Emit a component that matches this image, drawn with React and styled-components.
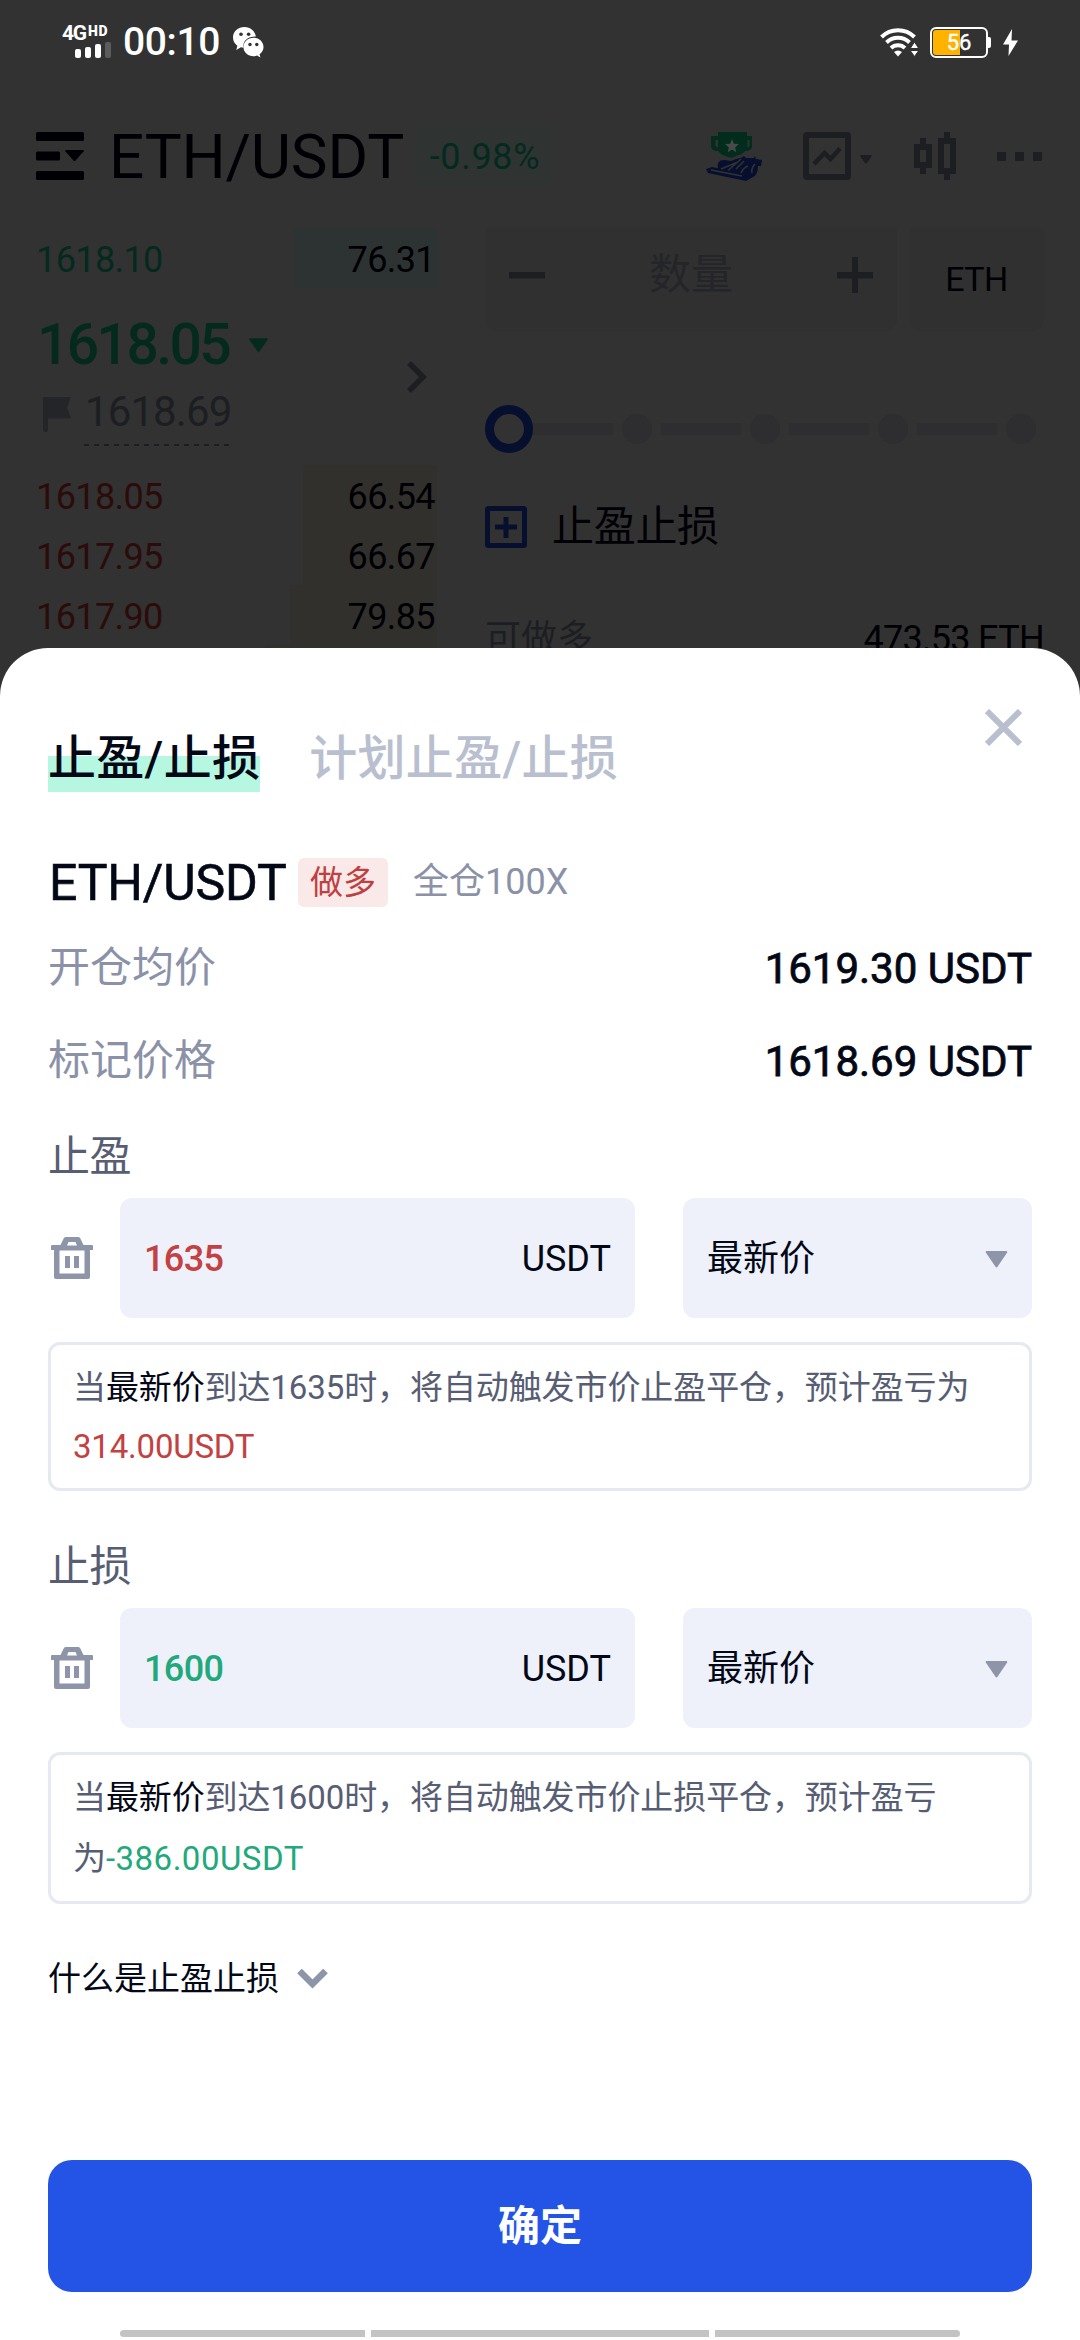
import { Fragment } from 'react'
import styled, { createGlobalStyle, css } from 'styled-components'

const GlobalStyle = createGlobalStyle`
  * {
    box-sizing: border-box;
  }

  body {
    margin: 0;
    background: #323232;
    font-family: Roboto, 'Noto Sans CJK SC', sans-serif;
  }

  svg {
    display: block;
    flex: none;
  }
`

const Page = styled.div`
  width: 1080px;
  height: 2340px;
  display: flex;
  flex-direction: column;
  overflow: hidden;
  background: #323232;
`

/* status bar */
const StatusBar = styled.div`
  height: 84px;
  flex: none;
  display: flex;
  justify-content: space-between;
  align-items: center;
  padding: 0 62px;
  color: #fff;
`
const StatusGroup = styled.div`
  display: flex;
  align-items: center;
`
const Network = styled.div`
  width: 61px;
  height: 32px;
  display: flex;
  flex-direction: column;
  justify-content: space-between;
`
const NetworkLabel = styled.div`
  display: flex;
  align-items: flex-start;
  height: 15px;
  font-size: 21px;
  font-weight: 700;
  line-height: 15px;
  letter-spacing: -1.2px;

  & small {
    margin-left: 2px;
    font-size: 14px;
    font-weight: 900;
    line-height: 10px;
    letter-spacing: 0.6px;
  }
`
const SignalBars = styled.div`
  display: flex;
  align-items: flex-end;
  gap: 4px;
  padding-left: 13px;
`
const SignalBar = styled.i`
  width: 6px;
  height: ${props => props.$height}px;
  border-radius: 2px;
  background: ${props => (props.$off ? '#5c5c5c' : '#fff')};
`
const Clock = styled.span`
  width: 110px;
  font-size: 39px;
  font-weight: 500;
  line-height: 40px;
  letter-spacing: -0.4px;
`
const Battery = styled.div`
  width: 58px;
  height: 31px;
  margin: 0 15px 0 12px;
  padding: 1px;
  border: 2px solid #fff;
  border-radius: 6px;
  background: linear-gradient(to right, #ffb300 52%, transparent 52%) content-box;
  font-size: 22px;
  line-height: 26px;
  text-align: center;
  -webkit-text-stroke: 0.4px #fff;
  position: relative;

  &::after {
    content: '';
    position: absolute;
    top: 8px;
    right: -5px;
    width: 3px;
    height: 11px;
    border-radius: 0 2px 2px 0;
    background: #fff;
  }
`

/* trade page under the mask */
const TradePage = styled.div`
  height: 564px;
  flex: none;
  display: flex;
  flex-direction: column;
  overflow: hidden;
  color: #000004;
`
const Header = styled.div`
  height: 144px;
  flex: none;
  display: flex;
  align-items: center;
  padding: 0 38px 0 36px;
`
const Pair = styled.span`
  width: 306px;
  margin-left: 25px;
  padding-top: 2px;
  font-size: 62px;
  line-height: 72px;
  letter-spacing: -0.2px;
  white-space: nowrap;
`
const Change = styled.span`
  width: 140px;
  height: 60px;
  border-radius: 6px;
  background: #2f3433;
  color: #042a1e;
  font-size: 36px;
  line-height: 62px;
  letter-spacing: 0.7px;
  text-align: center;
`
const HeaderIcons = styled.div`
  flex: 1;
  display: flex;
  align-items: center;
  justify-content: flex-end;
  gap: 41px;
`
const TradeBody = styled.div`
  display: flex;
  flex: 1;
`
const OrderBook = styled.div`
  width: 437px;
  display: flex;
  flex-direction: column;
`
const OrderRow = styled.div`
  height: 60px;
  flex: none;
  display: flex;
  justify-content: space-between;
  padding: 0 2px 0 36px;
  background: linear-gradient(${props => props.$tint}, ${props => props.$tint}) right /
    ${props => props.$depth}px 100% no-repeat;
  font-size: 36px;
  line-height: 65px;
  letter-spacing: -0.6px;
`
const OrderPrice = styled.span`
  color: ${props => (props.$buy ? '#2c0b0b' : '#042a1e')};
`
const LastPrice = styled.div`
  height: 177px;
  flex: none;
  display: flex;
  align-items: center;
  justify-content: space-between;
  padding: 0 10px 0 36px;
`
const PriceStack = styled.div`
  display: flex;
  flex-direction: column;
  height: 177px;
  padding-top: 21px;
`
const BigPrice = styled.div`
  display: flex;
  align-items: center;
  gap: 20px;
  height: 72px;
  padding-left: 1px;
  color: #042a1e;
  font-size: 57px;
  font-weight: 500;
  line-height: 72px;
  letter-spacing: -2.6px;
`
const MarkPrice = styled.div`
  display: flex;
  align-items: center;
  gap: 13px;
  height: 66px;
  padding-left: 7px;
`
const MarkValue = styled.span`
  width: 145px;
  height: 64px;
  padding-left: 1px;
  background: repeating-linear-gradient(to right, #1d1e22 0 5px, transparent 5px 10px) bottom /
    100% 2px no-repeat;
  color: #1d1e22;
  font-size: 42px;
  line-height: 60px;
  letter-spacing: -0.9px;
`
const OrderForm = styled.div`
  flex: 1;
  padding: 0 36px 0 48px;
`
const FormRow = styled.div`
  display: flex;
  gap: 12px;
  height: 103px;
`
const FormBox = styled.div`
  ${props => (props.$width ? `width: ${props.$width}px;` : 'flex: 1;')}
  display: flex;
  align-items: center;
  justify-content: ${props => (props.$width ? 'center' : 'space-between')};
  padding: 0 24px ${props => (props.$width ? 2 : 10)}px;
  border-radius: 0 0 12px 12px;
  background: #303030;
  font-size: 34px;
  letter-spacing: -0.5px;
  line-height: 46px;
`
const Placeholder = styled.span`
  color: #242528;
  font-size: 42px;
  letter-spacing: 0;
`
const Slider = styled.div`
  display: flex;
  align-items: center;
  margin-top: 74px;
  height: 48px;
`
const Thumb = styled.i`
  width: 48px;
  height: 48px;
  flex: none;
  border: 9px solid #060f2d;
  border-radius: 50%;
`
const Track = styled.i`
  width: 80px;
  height: 12px;
  margin-right: 9px;
  background: #2e2e31;
`
const Stop = styled.i`
  width: 30px;
  height: 30px;
  margin-right: ${props => (props.$last ? 0 : 9)}px;
  border-radius: 50%;
  background: #2e2e31;
`
const CheckRow = styled.div`
  display: flex;
  align-items: center;
  gap: 25px;
  height: 60px;
  margin-top: 44px;
  font-size: 42px;
  line-height: 60px;
  letter-spacing: -0.3px;
`
const AvailableRow = styled.div`
  display: flex;
  justify-content: space-between;
  height: 39px;
  margin-top: 52px;
  font-size: 36px;
  line-height: 60px;
  letter-spacing: -0.7px;

  & span:first-child {
    color: #1d1e22;
    letter-spacing: 0;
  }
`

/* bottom sheet */
const Sheet = styled.div`
  flex: 1;
  display: flex;
  flex-direction: column;
  padding: 0 48px;
  border-radius: 48px 48px 0 0;
  background: #fff;
  color: #030817;
`
const Tabs = styled.div`
  display: flex;
  align-items: flex-start;
  height: 198px;
  padding-top: 77px;
`
const Tab = styled.span`
  height: 67px;
  margin-right: 49px;
  font-size: 48px;
  font-weight: 500;
  line-height: 67px;
  letter-spacing: 0.3px;
  color: ${props => (props.$active ? '#030817' : '#b9bfcf')};
  ${props =>
    props.$active &&
    css`
      background: linear-gradient(#b6f7e2, #b6f7e2) bottom / 100% 36px no-repeat;
    `}
`
const Close = styled.div`
  margin: -16px 10px 0 auto;
`
const Position = styled.div`
  display: flex;
  align-items: center;
  height: 72px;
  line-height: 48px;
`
const PositionPair = styled.span`
  width: 250px;
  padding: 2px 0 0 1px;
  font-size: 50px;
  -webkit-text-stroke: 0.6px #030817;
  letter-spacing: -0.2px;
`
const SideTag = styled.span`
  width: 90px;
  height: 49px;
  margin-right: 25px;
  border-radius: 6px;
  background: #fae9e9;
  color: #bf4040;
  font-size: 33px;
  line-height: 50px;
  text-align: center;
`
const Leverage = styled.span`
  color: #8b92a8;
  font-size: 36px;
`
const InfoRow = styled.div`
  display: flex;
  justify-content: space-between;
  height: 93px;
  font-size: 42px;
  line-height: 102px;
`
const InfoLabel = styled.span`
  color: #8b92a8;
  line-height: 99px;
`
const InfoValue = styled.span`
  -webkit-text-stroke: 0.8px #030817;
`
const Section = styled.section`
  display: flex;
  flex-direction: column;
`
const SectionTitle = styled.h3`
  height: 94px;
  margin: 0;
  color: #575d73;
  font-size: 42px;
  font-weight: 400;
  line-height: 106px;
  letter-spacing: -0.6px;
`
const Controls = styled.div`
  display: flex;
  align-items: center;
  justify-content: space-between;
  height: 120px;
  margin-bottom: 24px;
`
const PriceGroup = styled.div`
  display: flex;
  align-items: center;
  gap: 27px;
  padding-left: 3px;
`
const Field = styled.div`
  width: ${props => props.$width}px;
  height: 120px;
  display: flex;
  align-items: center;
  justify-content: space-between;
  padding: 2px 24px 0;
  border-radius: 12px;
  background: #eef0fa;
  font-size: 36px;
  line-height: 44px;
`
const Price = styled.span`
  color: ${props => props.$color};
  font-weight: 500;
  letter-spacing: -0.6px;
`
const Note = styled.p`
  height: ${props => props.$height}px;
  margin: 0 0 ${props => props.$gap}px;
  padding: ${props => props.$top}px 22px;
  border: 3px solid #e6e9f2;
  border-radius: 12px;
  color: #575d73;
  font-size: 33px;
  line-height: ${props => props.$line}px;
  letter-spacing: -0.1px;
  white-space: nowrap;

  & b {
    color: #030817;
    font-weight: 400;
  }

  & em {
    color: ${props => props.$color};
    font-style: normal;
    letter-spacing: ${props => props.$spacing}px;
  }
`
const Faq = styled.div`
  display: flex;
  align-items: center;
  gap: 18px;
  height: 60px;
  font-size: 33px;
  line-height: 60px;
`
const Confirm = styled.button`
  width: 984px;
  height: 132px;
  margin-top: auto;
  flex: none;
  border: 0;
  border-radius: 24px;
  background: #2354e6;
  color: #fff;
  font-family: inherit;
  font-size: 42px;
  font-weight: 700;
  line-height: 132px;
`
const NavBar = styled.div`
  flex: none;
  display: flex;
  gap: 6px;
  height: 10px;
  margin: 38px 72px 0;
`
const NavPill = styled.i`
  flex: ${props => props.$grow};
  height: 7px;
  background: #c3c3c3;

  &:first-child {
    border-radius: 4px 0 0 4px;
  }

  &:last-child {
    border-radius: 0 4px 4px 0;
  }
`

const WechatIcon = () => (
  <svg width="31" height="31" viewBox="0 0 31 31">
    <path
      fill="#fff"
      d="M11.5 0C5 0 0 4.600 0 10.500c0 3.500 1.700 6.300 4.300 8.200L3.300 23l4.600-2.700c1 .3 1.800.4 2.700.4-1.300-6.600 4-11.300 12.300-11.200C22 4 17.300 0 11.500 0z"
    />
    <path
      fill="#fff"
      d="M20.500 10.700c-5.600 0-10 4-10 9.200s4.400 9.300 10 9.300c1.300 0 2.400-.2 3.500-.6l3.400 1.900-.8-3.200c2.500-1.900 3.900-4.400 3.900-7.400 0-5.200-4.400-9.200-10-9.200z"
    />
    <g fill="#323232">
      <circle cx="8" cy="7.200" r="1.800" />
      <circle cx="15.600" cy="7.200" r="1.800" />
      <circle cx="17" cy="17.500" r="1.700" />
      <circle cx="23.800" cy="17.500" r="1.700" />
    </g>
  </svg>
)

const WifiIcon = () => (
  <svg width="38" height="29" viewBox="0 0 38 29">
    <g fill="none" stroke="#fff" strokeWidth="4">
      <path d="M1.500 9a23.500 23.500 0 0 1 33 0" />
      <path d="M6.500 14.500a16.500 16.500 0 0 1 23 0" />
      <path d="M11 20a10 10 0 0 1 14 0" />
    </g>
    <path fill="#fff" d="M18 28.500l-4-4.500a6 6 0 0 1 8 0z" />
    <path fill="#fff" stroke="#323232" strokeWidth="1" d="M34.500 14l4.300 6.500h-8.600zM34.500 28.500l4.300-6h-8.600z" />
  </svg>
)

const BoltIcon = () => (
  <svg width="15" height="27" viewBox="0 0 15 27">
    <path fill="#fff" d="M9 0L0 15.500h6L5.500 27 15 11.500H8.500z" />
  </svg>
)

const ListIcon = () => (
  <svg width="48" height="48" viewBox="0 0 48 48" fill="#000004">
    <rect width="48" height="9" rx="1.500" />
    <rect y="19.500" width="24" height="9" rx="1.500" />
    <rect y="39" width="48" height="9" rx="1.500" />
    <path d="M30 18h17q1.500 0 .5 1.500l-8 9q-1 1-2 0l-8-9q-1-1.500.5-1.500z" />
  </svg>
)

const RaceIcon = () => (
  <svg width="56" height="50" viewBox="0 0 56 50">
    <path
      fill="#022c1c"
      d="M12 1h29v4h5v10q0 5-7 5-3 4-7 4l-6 3-7-2-4-2-3-3q-7 0-7-5V5h7zM9.500 9v6q0 1 2.500 1V9zm32 0v7q2 0 2-1V9z"
      fillRule="evenodd"
    />
    <path fill="#484b4a" d="M26 8l1.900 4.700 5 .4-3.800 3.300 1.200 4.900L26 18.600l-4.300 2.700 1.200-4.900-3.800-3.300 5-.4z" />
    <path
      fill="#060f2d"
      d="M38 25l2 2h8l1-2 1 3 6 1-1 6h-3q0 9-5 11l-7 4L2 42l-2-4 6-2 9 2h-3q-2-9 6-9l7 1 5-2 6-1.500z"
    />
    <path
      fill="none"
      stroke="#323232"
      strokeWidth="1.600"
      d="M15 38l17-7M22 39.500l13-11.500M5 39l31 6M35 42q2-5 7-7M49 33q-4 4-3 9M30 38l8-8"
    />
  </svg>
)

const ChartIcon = () => (
  <svg width="70" height="48" viewBox="0 0 70 48">
    <rect x="3" y="3" width="42" height="42" rx="1" fill="none" stroke="#1d1e22" strokeWidth="6" />
    <path d="M11 32l10.500-11 6 6L37 16.500" fill="none" stroke="#1d1e22" strokeWidth="4.500" />
    <path d="M58 23h10q1.500 0 .5 1.500L64 31q-1 1.500-2 0l-4.700-6.500q-.8-1.500.7-1.500z" fill="#1d1e22" />
  </svg>
)

const CandleIcon = () => (
  <svg width="42" height="48" viewBox="0 0 42 48" fill="#1d1e22">
    <path
      fillRule="evenodd"
      d="M6 6h6v6h6v24h-6v6H6v-6H0V12h6zm0 12v12h6V18zM30 0h6v6h6v36h-6v6h-6v-6h-6V6h6zm0 12v24h6V12z"
    />
  </svg>
)

const DotsIcon = () => (
  <svg width="45" height="9" viewBox="0 0 45 9" fill="#1d1e22">
    <rect width="9" height="9" rx="1" />
    <rect x="18" width="9" height="9" rx="1" />
    <rect x="36" width="9" height="9" rx="1" />
  </svg>
)

const Triangle = ({ width, height, color }) => (
  <svg width={width} height={height} viewBox="0 0 22 17">
    <path fill={color} d="M1.500 0h19q2 0 1 1.700l-9.500 14q-1 1.500-2 0L.5 1.700q-1-1.700 1-1.700z" />
  </svg>
)

const FlagIcon = () => (
  <svg width="28" height="35" viewBox="0 0 28 35">
    <path fill="#242528" d="M0 0h27q1 0 .5 1L24 11l4 9.500q.3 1-.5 1H5V33q0 2-2.500 2T0 33z" />
  </svg>
)

const ArrowRight = () => (
  <svg width="20" height="32" viewBox="0 0 20 32">
    <path fill="none" stroke="#1d1e22" strokeWidth="5.500" d="M2 2l14 14L2 30" />
  </svg>
)

const MinusIcon = () => (
  <svg width="36" height="36" viewBox="0 0 36 36">
    <path fill="#1d1e22" d="M0 15h36v6.500H0z" />
  </svg>
)

const PlusIcon = () => (
  <svg width="36" height="36" viewBox="0 0 36 36">
    <path fill="#1d1e22" d="M0 15h15V0h6v15h15v6.500H21V36h-6V21.500H0z" />
  </svg>
)

const CheckIcon = () => (
  <svg width="42" height="42" viewBox="0 0 42 42">
    <rect x="2.500" y="2.500" width="37" height="37" rx="1" fill="none" stroke="#060f2d" strokeWidth="5" />
    <path fill="#060f2d" d="M10 18.500h8.500V11h5v7.500H32v5h-8.500V32h-5v-8.500H10z" />
  </svg>
)

const CloseIcon = () => (
  <svg width="37" height="37" viewBox="0 0 37 37">
    <path stroke="#b9bfcf" strokeWidth="6" d="M2 2l33 33M35 2L2 35" />
  </svg>
)

const TrashIcon = () => (
  <svg width="42" height="42" viewBox="0 0 42 42" fill="#8e95a9">
    <path
      fillRule="evenodd"
      d="M15 0h12q1.500 0 2.200 1.200L32.500 8H41q1 0 1 1v4h-3v27q0 2-2 2H5q-2 0-2-2V13H0V9q0-1 1-1h8.500l3.300-6.800Q13.500 0 15 0zm2.500 5L16 8.500h10L24.500 5zM8.500 13.500v23h25v-23z"
    />
    <path d="M14 19h5v12h-5zM23 19h5v12h-5z" />
  </svg>
)

const ChevronDown = () => (
  <svg width="31" height="20" viewBox="0 0 31 20">
    <path fill="none" stroke="#8e95a9" strokeWidth="6.500" d="M2.500 2l13 13 13-13" />
  </svg>
)

const bids = [
  { id: 1, price: '1618.05', amount: '66.54', depth: 134 },
  { id: 2, price: '1617.95', amount: '66.67', depth: 134 },
  { id: 3, price: '1617.90', amount: '79.85', depth: 147 },
  { id: 4, depth: 172 },
]

const infos = [
  { label: '开仓均价', value: '1619.30 USDT' },
  { label: '标记价格', value: '1618.69 USDT' },
]

const triggers = [
  {
    title: '止盈',
    price: '1635',
    color: '#c34141',
    height: 149,
    top: 14,
    line: 58.5,
    gap: 23,
    spacing: -0.2,
    tail: '预计盈亏为',
    profit: '314.00USDT',
  },
  {
    title: '止损',
    price: '1600',
    color: '#22a97b',
    height: 152,
    top: 12,
    line: 61,
    gap: 45,
    spacing: 0.5,
    tail: '预计盈亏',
    wrapped: '为',
    profit: '-386.00USDT',
  },
]

const Trigger = ({ data }) => (
  <Section>
    <SectionTitle>{data.title}</SectionTitle>
    <Controls>
      <PriceGroup>
        <TrashIcon />
        <Field $width={515}>
          <Price $color={data.color}>{data.price}</Price>
          <span>USDT</span>
        </Field>
      </PriceGroup>
      <Field $width={349}>
        <span>最新价</span>
        <Triangle width={23} height={17} color="#8e95a9" />
      </Field>
    </Controls>
    <Note
      $height={data.height}
      $top={data.top}
      $line={data.line}
      $gap={data.gap}
      $spacing={data.spacing}
      $color={data.color}
    >
      当<b>最新价</b>到达{data.price}时，将自动触发市价{data.title}平仓，{data.tail}
      <br />
      {data.wrapped}
      <em>{data.profit}</em>
    </Note>
  </Section>
)

const App = () => (
  <>
    <GlobalStyle />
    <Page>
      <StatusBar>
        <StatusGroup>
          <Network>
            <NetworkLabel>
              4G<small>HD</small>
            </NetworkLabel>
            <SignalBars>
              <SignalBar $height={9} />
              <SignalBar $height={11} />
              <SignalBar $height={14} />
              <SignalBar $height={16} $off />
            </SignalBars>
          </Network>
          <Clock>00:10</Clock>
          <WechatIcon />
        </StatusGroup>
        <StatusGroup>
          <WifiIcon />
          <Battery>56</Battery>
          <BoltIcon />
        </StatusGroup>
      </StatusBar>

      <TradePage>
        <Header>
          <ListIcon />
          <Pair>ETH/USDT</Pair>
          <Change>-0.98%</Change>
          <HeaderIcons>
            <RaceIcon />
            <ChartIcon />
            <CandleIcon />
            <DotsIcon />
          </HeaderIcons>
        </Header>
        <TradeBody>
          <OrderBook>
            <OrderRow $tint="#2d3332" $depth={143}>
              <OrderPrice>1618.10</OrderPrice>
              <span>76.31</span>
            </OrderRow>
            <LastPrice>
              <PriceStack>
                <BigPrice>
                  1618.05
                  <Triangle width={19} height={15} color="#042a1e" />
                </BigPrice>
                <MarkPrice>
                  <FlagIcon />
                  <MarkValue>1618.69</MarkValue>
                </MarkPrice>
              </PriceStack>
              <ArrowRight />
            </LastPrice>
            {bids.map(bid => (
              <OrderRow key={bid.id} $tint="#31302d" $depth={bid.depth}>
                <OrderPrice $buy>{bid.price}</OrderPrice>
                <span>{bid.amount}</span>
              </OrderRow>
            ))}
          </OrderBook>
          <OrderForm>
            <FormRow>
              <FormBox>
                <MinusIcon />
                <Placeholder>数量</Placeholder>
                <PlusIcon />
              </FormBox>
              <FormBox $width={135}>ETH</FormBox>
            </FormRow>
            <Slider>
              <Thumb />
              {[1, 2, 3, 4].map(step => (
                <Fragment key={step}>
                  <Track />
                  <Stop $last={step === 4} />
                </Fragment>
              ))}
            </Slider>
            <CheckRow>
              <CheckIcon />
              止盈止损
            </CheckRow>
            <AvailableRow>
              <span>可做多</span>
              <span>473.53 ETH</span>
            </AvailableRow>
          </OrderForm>
        </TradeBody>
      </TradePage>

      <Sheet>
        <Tabs>
          <Tab $active>止盈/止损</Tab>
          <Tab>计划止盈/止损</Tab>
          <Close>
            <CloseIcon />
          </Close>
        </Tabs>
        <Position>
          <PositionPair>ETH/USDT</PositionPair>
          <SideTag>做多</SideTag>
          <Leverage>全仓100X</Leverage>
        </Position>
        {infos.map(info => (
          <InfoRow key={info.label}>
            <InfoLabel>{info.label}</InfoLabel>
            <InfoValue>{info.value}</InfoValue>
          </InfoRow>
        ))}
        {triggers.map(item => (
          <Trigger key={item.title} data={item} />
        ))}
        <Faq>
          什么是止盈止损
          <ChevronDown />
        </Faq>
        <Confirm>确定</Confirm>
        <NavBar>
          <NavPill $grow={245} />
          <NavPill $grow={338} />
          <NavPill $grow={245} />
        </NavBar>
      </Sheet>
    </Page>
  </>
)

export default App
